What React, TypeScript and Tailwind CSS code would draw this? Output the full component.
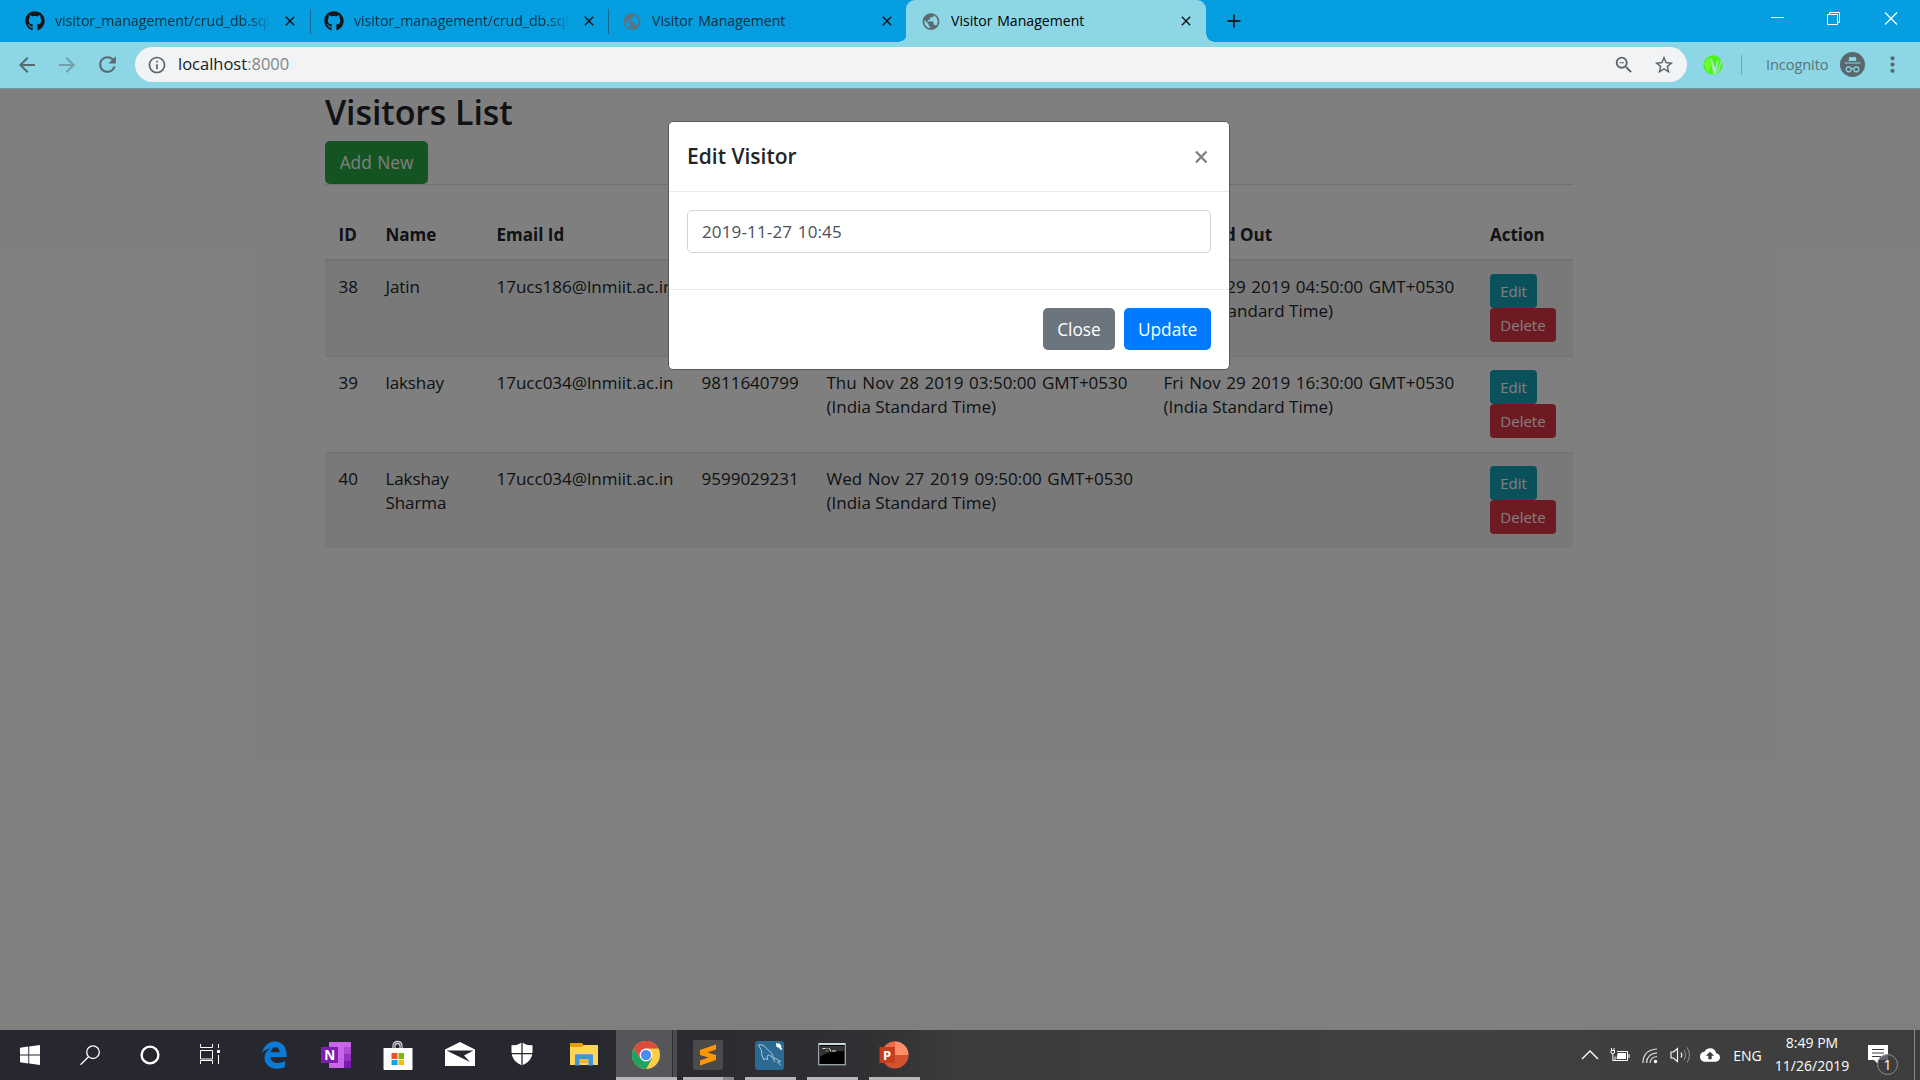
import React from "react";
import { FaGithub } from "react-icons/fa";
import {
  MdArrowBack,
  MdArrowForward,
  MdRefresh,
  MdInfoOutline,
  MdZoomOut,
  MdStarBorder,
  MdPublic,
  MdAdd,
  MdMoreVert,
  MdCloudUpload,
  MdClose,
} from "react-icons/md";

function Tab({ icon, title, active = false, fade = false }: { icon: React.ReactNode; title: string; active?: boolean; fade?: boolean }) {
  return (
    <div className="flex h-full w-full items-center pl-[15px]">
      <span className="flex w-[20px] shrink-0 justify-center text-[20px]">{icon}</span>
      <span className={"ml-[10px] w-[216px] overflow-hidden whitespace-nowrap text-[14.1px] [word-spacing:1px] " + (active ? "text-black" : "text-[#12303f]") + (fade ? " [mask-image:linear-gradient(to_right,black_90%,transparent)]" : "")}>
        {title}
      </span>
      <MdClose className="ml-[11px] shrink-0 stroke-current text-[16px] text-[#111]" />
    </div>
  );
}

function BrowserTabs() {
  return (
    <div className="flex h-[42px] bg-[#049ee1]">
      <div className="flex h-full w-[310px] pl-[10px]">
        <Tab icon={<FaGithub className="text-[#161616]" />} title="visitor_management/crud_db.sql" fade />
      </div>
      <div className="mt-[9px] h-[25px] w-px shrink-0 bg-[#0f6a92]" />
      <div className="-ml-[2px] flex h-full w-[299px]">
        <Tab icon={<FaGithub className="text-[#161616]" />} title="visitor_management/crud_db.sql" fade />
      </div>
      <div className="mt-[9px] h-[25px] w-px shrink-0 bg-[#0f6a92]" />
      <div className="flex h-full w-[297px] justify-between">
        <div className="-ml-[2px] w-[290px]">
          <Tab icon={<MdPublic className="text-[21px] text-[#607179]" />} title="Visitor Management" />
        </div>
        <div className="h-[7px] w-[6px] self-end bg-[radial-gradient(circle_at_0_0,transparent_6px,#8dd6e6_6.5px)]" />
      </div>
      <div className="h-full w-[300px] rounded-t-[9px] bg-[#8dd6e6]">
        <Tab icon={<MdPublic className="text-[21px] text-[#5c6a6f]" />} title="Visitor Management" active />
      </div>
      <div className="h-[7px] w-[7px] self-end bg-[radial-gradient(circle_at_100%_0,transparent_6px,#8dd6e6_6.5px)]" />
      <div className="flex w-[41px] items-center justify-center">
        <MdAdd className="stroke-current text-[22px] text-[#14202a]" />
      </div>
      <div className="ml-auto flex text-white">
        <svg width="56" height="36" fill="none" stroke="currentColor"><path d="M21 17.5h13" /></svg>
        <svg width="57" height="36" fill="none" stroke="currentColor"><path d="M21.5 14.5h10v10h-10zM23.5 14.5v-2h10v10h-2" /></svg>
        <svg width="57" height="36" fill="none" stroke="currentColor" strokeWidth="1.2"><path d="M22 12.500l12 12M34 12.500l-12 12" /></svg>
      </div>
    </div>
  );
}

function Toolbar() {
  return (
    <div className="flex h-[47px] items-center border-b border-[#6b99a3] bg-[#8dd6e6] pb-px text-[#566a70]">
      <MdArrowBack className="ml-[15px] text-[24px]" />
      <MdArrowForward className="ml-[16px] text-[24px] opacity-50" />
      <MdRefresh className="ml-[16px] text-[25px]" />
      <div className="ml-[15px] flex h-[35px] w-[1552px] items-center rounded-full bg-[#f1f3f5] text-[#5f6368]">
        <MdInfoOutline className="ml-[12px] text-[20px]" />
        <span className="ml-[11px] text-[16.5px] text-[#202124]">
          localhost<span className="text-[#80868b]">:8000</span>
        </span>
        <MdZoomOut className="ml-auto text-[22px]" />
        <MdStarBorder className="mr-[12px] ml-[18px] text-[22px]" />
      </div>
      <svg width="20" height="20" className="ml-[16px]">
        <circle cx="10" cy="10" r="9.700" fill="#4bf51b" />
        <path d="M7 3.500l2 .5 3.200 9L14.500 5l1.200-.500-2.700 15-2.500-.5z" fill="#a5e8c4" />
        <path d="M17.500 6l1.500-1-3.500 12-1.500 1z" fill="#a5e8c4" />
        <path d="M1 9l5-6 2 9-3 5z" fill="#6dff2b" />
      </svg>
      <div className="ml-[18px] h-[20px] w-px bg-[#68a6b3]" />
      <span className="ml-[24px] w-[65px] text-[14.6px] tracking-[-0.1px] text-[#5b7378]">Incognito</span>
      <svg width="25" height="25" viewBox="0 0 25 25" className="ml-[9px]">
        <circle cx="12.500" cy="12.500" r="12.500" fill="#59686c" />
        <path d="M8.500 9l1-4.300 3 .6 3-.6 1 4.300zM4.500 10.500h16v1h-16z" fill="#8dd6e6" />
        <g fill="none" stroke="#8dd6e6" strokeWidth="1.2">
          <circle cx="8.700" cy="17.300" r="2.500" />
          <circle cx="16.300" cy="17.300" r="2.500" />
          <path d="M11.200 17q1.300-.8 2.600 0" />
        </g>
      </svg>
      <MdMoreVert className="ml-[15px] text-[25px]" />
    </div>
  );
}

const rows = [
  { id: "38", name: "Jatin", email: "17ucs186@lnmiit.ac.in", phone: "", tin: "", tout: "Fri Nov 29 2019 04:50:00 GMT+0530", style: "h-[95px] bg-[#f2f2f2]" },
  { id: "39", name: "lakshay", email: "17ucc034@lnmiit.ac.in", phone: "9811640799", tin: "Thu Nov 28 2019 03:50:00 GMT+0530", tout: "Fri Nov 29 2019 16:30:00 GMT+0530", style: "h-[96px] border-t border-[#dee2e6]" },
  { id: "40", name: "Lakshay Sharma", email: "17ucc034@lnmiit.ac.in", phone: "9599029231", tin: "Wed Nov 27 2019 09:50:00 GMT+0530", tout: "", style: "h-[96px] border-t border-[#dee2e6] bg-[#f2f2f2]" },
];

function Stamp({ value }: { value: string }) {
  if (!value) return null;
  return (
    <>
      <div className="whitespace-nowrap [word-spacing:1.2px]">{value}</div>
      <div className="whitespace-nowrap">(India Standard Time)</div>
    </>
  );
}

const gridCols = "grid grid-cols-[47px_111px_205px_125px_337px_326.5px_96.5px]";

function Visitors() {
  return (
    <div className="ml-[325px] w-[1248px] text-[17px] text-[#212529]">
      <h2 className="h-[52px] pt-[2px] text-[34px] leading-[43px] font-semibold tracking-[-0.1px]">Visitors List</h2>
      <div className="h-[43px]">
        <button className="h-[43px] w-[103px] rounded-[5px] bg-[#28a745] pt-px text-[17.300px] text-white [word-spacing:1px]">Add New</button>
      </div>
      <div className="h-px bg-[#e0e0e0]" />
      <div className={gridCols + " mt-[25px] h-[51px] border-b-[2px] border-[#dee2e6] pt-[12px] leading-[25px] font-bold"}>
        {["ID", "Name", "Email Id", "", "", "Checked Out", "Action"].map((h, i) => (
          <div key={i} className="pl-[13.500px]">{h}</div>
        ))}
      </div>
      {rows.map((r) => (
        <div key={r.id} className={gridCols + " pt-[13px] leading-[24px] [&>div]:pl-[13.5px] [&>div]:pt-px " + r.style}>
          <div>{r.id}</div>
          <div className="tracking-[-0.1px]">{r.name}</div>
          <div>{r.email}</div>
          <div>{r.phone}</div>
          <div><Stamp value={r.tin} /></div>
          <div><Stamp value={r.tout} /></div>
          <div className="-mt-px flex flex-col items-start text-[15px] text-white">
            <button className="h-[34px] w-[47px] rounded-[4px] bg-[#17a2b8]">Edit</button>
            <button className="h-[34px] w-[66px] rounded-[4px] bg-[#dc3545]">Delete</button>
          </div>
        </div>
      ))}
    </div>
  );
}

function Modal() {
  return (
    <div className="absolute inset-0 flex items-start justify-center bg-black/50 pr-[22px]">
      <div className="mt-[32px] h-[249px] w-[562px] rounded-[5px] border border-[#595959] bg-white text-[17px]">
        <div className="flex h-[70px] items-center justify-between border-b border-[#e9ecef] pr-[20px] pl-[18px]">
          <span className="text-[21px] font-semibold text-[#212529]">Edit Visitor</span>
          <svg width="15" height="16" fill="none" stroke="#7f7f7f" strokeWidth="2.300" className="mt-px"><path d="M2 2.500l10.500 11M12.500 2.500l-10.500 11" /></svg>
        </div>
        <div className="h-[98px] border-b border-[#e9ecef] px-[18px] pt-[18px]">
          <div className="flex h-[43px] items-center rounded-[5px] border border-[#ced4da] pl-[14px] tracking-[0.15px] text-[#495057] [word-spacing:1px]">2019-11-27 10:45</div>
        </div>
        <div className="flex justify-end gap-[9px] pt-[18px] pr-[18px] text-[17.300px] text-white">
          <button className="h-[42px] w-[72px] rounded-[5px] bg-[#6c757d] pt-px">Close</button>
          <button className="h-[42px] w-[87px] rounded-[5px] bg-[#007bff] pt-px">Update</button>
        </div>
      </div>
    </div>
  );
}

const pinned = [
  <svg key="edge" width="26" height="28" viewBox="0 0 26 28"><path d="M1 12C2.500 5 7.500 .5 14 .5c7 0 11.500 5 11.500 12V16H9.500c.3 4 3.500 6 7.500 6 2.500 0 5-.7 7-2v6c-2.200 1.200-5 1.700-8 1.700C8.500 27.700 3.500 23 3.500 17c0-4 2-7.500 6-9.500C6 8 3 9.500 1 12zm8.700-.8h9c0-3-1.500-5-4.300-5-2.500 0-4.200 2-4.700 5z" fill="#0b7bd7" /></svg>,
  <svg key="onenote" width="30" height="26" viewBox="0 0 30 26"><path d="M8 0h22v26H8z" fill="#ca64ea" /><path d="M23 5h7v7h-7z" fill="#ae4bd5" /><path d="M23 12h7v7h-7z" fill="#9332bf" /><path d="M23 19h7v7h-7z" fill="#7719aa" /><path d="M0 5h17v16H0z" fill="#7d1eaf" /><text x="3.300" y="17.800" fontSize="13.500" fontWeight="700" fill="white" fontFamily="Open Sans">N</text></svg>,
  <svg key="store" width="30" height="30" viewBox="0 0 30 30"><path d="M10 9V6q0-4.500 4.500-4.500T19 6v3M12 9V6q0-2.500 2.500-2.500T17 6v3" fill="none" stroke="#ccc" strokeWidth="1.300" /><path d="M.5 8h29v21q0 1-1 1h-27q-1 0-1-1z" fill="#fff" /><path d="M8.500 13h6v6h-6z" fill="#f25022" /><path d="M15.500 13h5.500v6h-5.500z" fill="#7fba00" /><path d="M8.500 20h6v5h-6z" fill="#00a4ef" /><path d="M15.500 20h5.500v5h-5.500z" fill="#ffb900" /></svg>,
  <svg key="mail" width="30" height="24" viewBox="0 0 30 24" className="mt-[-2px]"><path d="M0 7.500L15 0l15 7.500V24H0z" fill="#fff" /><path d="M1.500 8.500h27L19 13.500l6 6.500z" fill="#26272f" /></svg>,
  <svg key="shield" width="22" height="24" viewBox="0 0 22 24" className="mt-[-2px]"><path d="M11 .5Q15.500 3.500 21.500 3.300V10Q21.500 19 11 23.500.500 19 .5 10V3.300Q6.500 3.500 11 .5z" fill="#fff" /><path d="M11 0v24M0 11.700h22" stroke="#26272f" strokeWidth="1.300" /></svg>,
  <svg key="explorer" width="28" height="24" viewBox="0 0 28 24" className="mt-[-2px]"><path d="M0 1h12l2 2.500V8H0z" fill="#e3a008" /><path d="M0 5h12l2-2h14v20H0z" fill="#ffd45b" /><path d="M9.500 17h9v4h-9z" fill="#e9b837" /><path d="M5 23.500V13.500q0-1.300 1.300-1.300h15.400q1.300 0 1.300 1.300v10h-4.500V17h-9v6.500z" fill="#3b97dc" /></svg>,
];

const running = [
  <svg key="sublime" width="30" height="30" viewBox="0 0 30 30"><rect width="30" height="30" rx="2" fill="#4a4a4a" /><path d="M7 10l16-5.500v5L14.500 12.500 23 15v5L7 25.500v-5l8.500-3L7 15z" fill="#ff9800" /></svg>,
  <svg key="mysql" width="29" height="29" viewBox="0 0 29 29"><rect width="29" height="29" rx="3" fill="#2a6a93" /><path d="M3.500 4q4.500-1.500 8.500 4 5 3 7 9 3 1 6.500 3.500l-3 .5 3.500 3.500M3.500 4l3 5.500Q6 14 9 19l1.500-2 2 2Q11 12 16 15q3 3 4 6" fill="none" stroke="#b4d0e0" strokeWidth=".9" /><path d="M21 1.500l2 1.500 1-1 2.500 3-.5 1.500 1.500 2-1.500.5-2.500-2.500-2-.5z" fill="#fff" /></svg>,
  <svg key="cmd" width="28" height="24" viewBox="0 0 28 24" className="mt-[-3px]"><rect x=".7" y="1.700" width="26.600" height="21" fill="#000" stroke="#95a0a8" strokeWidth="1.400" /><path d="M2 4h24v5Q8 9 2 15z" fill="#333" /><path d="M1 2h26" stroke="#cbd5dc" strokeWidth="2" /><path d="M4.500 6.500h3M9 6v1M9 8.500v1M11 6l2 3.500M14 9h4" stroke="#ddd" strokeWidth="1" fill="none" /></svg>,
  <svg key="ppt" width="30" height="28" viewBox="0 0 30 28"><circle cx="16" cy="14" r="13.500" fill="#d35230" /><path d="M16 .5A13.500 13.500 0 0 1 29.500 14H16z" fill="#ff8f6b" /><path d="M16 .5V14H2.500A13.500 13.500 0 0 1 16 .5z" fill="#ed6c47" /><path d="M.500 6h15.500v16H.500z" fill="#c43e1c" /><text x="4" y="18.700" fontSize="13" fontWeight="700" fill="white" fontFamily="Open Sans">P</text></svg>,
];

function ChromeLogo() {
  return (
    <svg width="28" height="28" viewBox="0 0 48 48">
      <circle cx="24" cy="24" r="24" fill="#ffcd46" />
      <path d="M24 24L3.200 12A24 24 0 0 1 44.800 12H24z" fill="#dd4b3e" />
      <path d="M3.200 12A24 24 0 0 0 24 48l10.400-18L24 24 13.600 30z" fill="#1da462" />
      <path d="M24 13h20.800A24 24 0 0 0 3.200 12l10.400 18z" fill="#dd4b3e" />
      <circle cx="24" cy="24" r="11" fill="#fff" />
      <circle cx="24" cy="24" r="8.800" fill="#4c8bf5" />
    </svg>
  );
}

function Taskbar() {
  return (
    <div className="flex h-[50px] items-stretch bg-[linear-gradient(to_right,#26272f_0%,#26272f_28%,#303033_45%,#3c3c3c_50%,#404040_75%,#3d3d3d_100%)] text-white">
      <div className="mr-[3px] flex [&>div]:flex [&>div]:w-[60px] [&>div]:items-center [&>div]:justify-center">
        <div><svg width="20" height="20" viewBox="0 0 20 20" fill="#fff"><path d="M0 2.800L8.300 1.500v8H0zM9.200 1.400L20 0v9.500H9.200zM0 10.500h8.300v8L0 17.300zM9.200 10.500H20V20L9.200 18.600z" /></svg></div>
        <div><svg width="20" height="20" viewBox="0 0 20 20" fill="none" stroke="#fff" strokeWidth="1.300"><circle cx="13" cy="7.200" r="6.300" /><path d="M8.500 11.800L.5 19.800" /></svg></div>
        <div><svg width="20" height="20" viewBox="0 0 20 20" fill="none" stroke="#fff" strokeWidth="2.400"><circle cx="10" cy="10" r="8.400" /></svg></div>
        <div><svg width="20" height="20" viewBox="0 0 20 20" fill="none" stroke="#fff" strokeWidth="1" className="mt-[-2px]"><path d="M.5 0v3.500h12V0M.5 6.500h12v8.500H.5zM.5 20v-3.500h12V20M18.500 0v4M18.500 11v9" /><path d="M17.500 6.500h2v2h-2z" fill="#fff" /></svg></div>
      </div>
      <div className="flex">
        {pinned.map((icon, i) => (
          <div key={i} className="flex w-[62px] items-center justify-center">{icon}</div>
        ))}
      </div>
      <div className="ml-px flex w-[61px] border-b-[3px] border-[#b9b6ba]">
        <div className="flex w-[56px] items-center justify-center bg-[#55555a] pt-[2px] pl-[4px]"><ChromeLogo /></div>
        <div className="flex-1 border-l border-[#303034] bg-[#4b4b50]" />
      </div>
      <div className="flex">
        {running.map((icon, i) => (
          <div key={i} className="flex w-[62px] flex-col items-center">
            <div className="flex h-[47px] items-center pt-[3px] pr-px">{icon}</div>
            {i === 0 ? (
              <div className="flex h-[3px] w-[51px]"><div className="w-[40px] bg-[#b9b6ba]" /><div className="flex-1 bg-[#8a888b]" /></div>
            ) : (
              <div className="h-[3px] w-[51px] bg-[#b9b6ba]" />
            )}
          </div>
        ))}
      </div>
      <div className="ml-auto flex [&>div]:flex [&>div]:items-center [&>div]:justify-center">
        <div className="w-[30px]"><svg width="18" height="10" fill="none" stroke="#fff" strokeWidth="1.400"><path d="M1 9l8-8 8 8" /></svg></div>
        <div className="w-[30px]"><svg width="20" height="14" viewBox="0 0 20 14" fill="none" stroke="#fff" strokeWidth="1"><path d="M7 3.500h10.500v9H5V8.500M19 6v4M1.500 0v2.500M4 0v2.500M2.800 6v6.500h2.500" /><path d="M1 2.500h3.500v2.500q-1.700 1.200-3.500 0z" /><path d="M8 5.500h7.500v5H7z" fill="#fff" /></svg></div>
        <div className="w-[30px]"><svg width="16" height="16" viewBox="0 0 16 16" fill="none" stroke="#ddd" strokeWidth="1.200" className="mt-[2px]"><path d="M1 15Q1 2 15 1M4.500 15Q5 5.500 15 4.800M8 15Q8.500 9 15 8.500" /><circle cx="13.500" cy="13.500" r="1.700" fill="#fff" stroke="none" /></svg></div>
        <div className="w-[30px]"><svg width="21" height="18" viewBox="0 0 21 18" fill="none" stroke="#fff" strokeWidth="1.100"><path d="M1 6h2.500L7.500 2.500v13l-4-3.500H1zM11 6.500q1.700 2.500 0 5" /><path d="M14 4q3 5 0 10M17 1.500q5 7.500 0 15" stroke="#8a8a8a" /></svg></div>
        <div className="w-[30px] text-[20px]"><MdCloudUpload /></div>
        <div className="w-[45px] text-[14px]">ENG</div>
        <div className="w-[84px] flex-col pb-[2px] text-[14px] leading-[23px]">
          <span className="whitespace-nowrap">8:49 PM</span>
          <span className="whitespace-nowrap">11/26/2019</span>
        </div>
        <div className="w-[60px] pr-[2px]">
          <svg width="32" height="32" viewBox="0 0 32 32" className="mt-[9px]">
            <path d="M1 1h20v15H11v4l-4-4H1z" fill="#fff" />
            <path d="M5 5.500h12M5 9h12M5 12.500h9" stroke="#3d3d3d" strokeWidth="1.200" />
            <circle cx="20.500" cy="20.500" r="10" fill="#3d3d3d" fillOpacity=".8" stroke="#8d8d8d" />
            <text x="20.500" y="26" fontSize="14" textAnchor="middle" fill="white" fontFamily="Open Sans">1</text>
          </svg>
        </div>
      </div>
      <div className="w-[6px] border-l border-[#888]" />
    </div>
  );
}

export default function App() {
  return (
    <div className="flex h-[1080px] w-[1920px] flex-col overflow-hidden bg-white font-['Open_Sans','Noto_Sans',sans-serif]">
      <BrowserTabs />
      <Toolbar />
      <div className="relative flex-1 overflow-hidden bg-white">
        <Visitors />
        <Modal />
      </div>
      <Taskbar />
    </div>
  );
}
